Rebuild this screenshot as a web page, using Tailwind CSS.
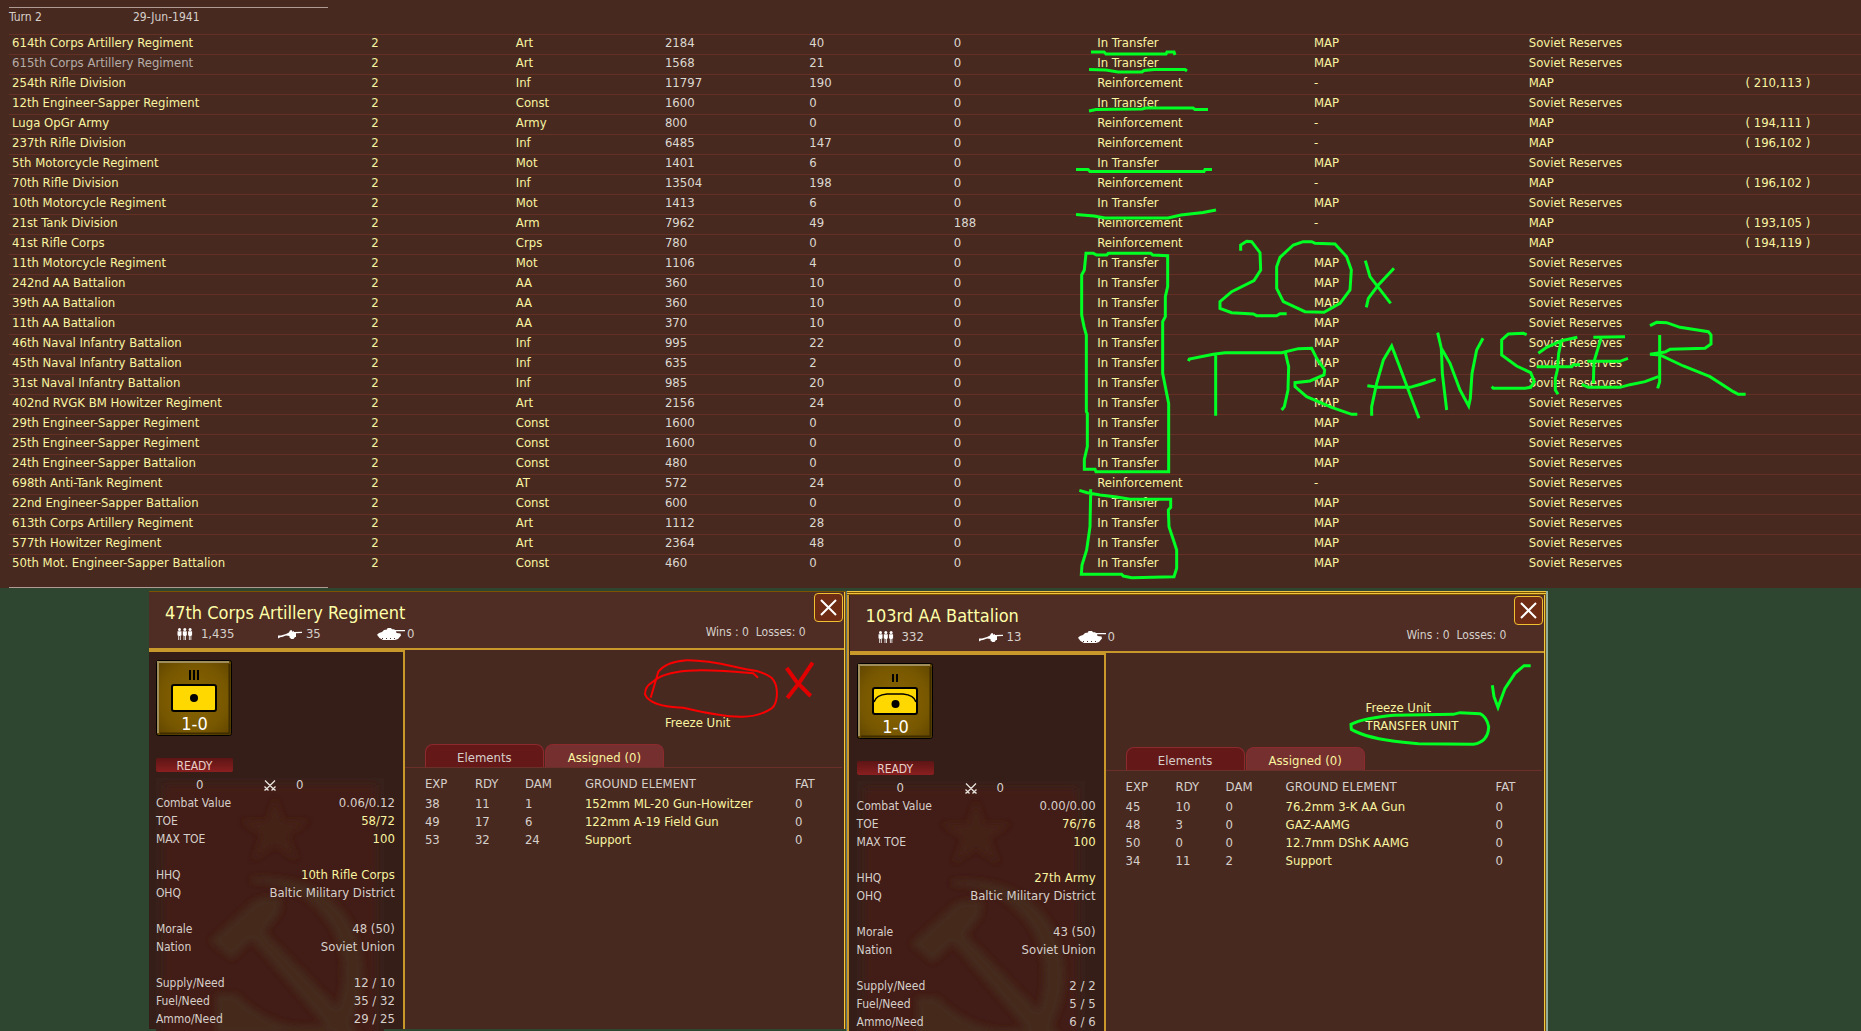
<!DOCTYPE html>
<html lang="en">
<head>
<meta charset="utf-8">
<title>Reinforcements</title>
<script src="https://cdn.jsdelivr.net/npm/@tailwindcss/browser@4"></script>
</head>
<body class="bg-[#2e452f] font-['DejaVu_Sans_Condensed','Noto_Sans',sans-serif] text-[13px] leading-[18px] text-[#d6cfca]">
<main class="relative flex min-h-screen flex-col">

  <section class="bg-[#482920] pl-[9px] pt-[7px]">
    <div class="flex h-[19px] w-[319px] border-t border-[#b09a94] text-[12px]">
      <span class="w-[124px]">Turn 2</span><span>29-Jun-1941</span>
    </div>
    <table class="mt-2 w-full table-fixed border-separate border-spacing-0 text-left text-[#f8f4a0]">
      <colgroup>
        <col class="w-[19.4%]"><col class="w-[7.8%]"><col class="w-[8%]"><col class="w-[7.8%]"><col class="w-[7.8%]"><col class="w-[7.8%]"><col class="w-[11.7%]"><col class="w-[11.6%]"><col class="w-[11.7%]"><col>
      </colgroup>
      <tbody id="units"></tbody>
    </table>
    <div class="mt-[13px] w-[319px] border-t border-[#b09a94]"></div>
  </section>

  <div class="ml-[8%] mt-[3px] flex w-[75.2%] flex-1" id="panels"></div>

  <svg class="pointer-events-none absolute inset-0 h-full w-full fill-none stroke-[#00ff22] stroke-3 [&_path]:[vector-effect:non-scaling-stroke]" viewBox="0 0 1861 1031" preserveAspectRatio="none" aria-hidden="true">
    <path d="M1091 52H1104L1106 54H1166L1167 52H1174L1175 55"/>
    <path d="M1089 69.500L1106 70 1118 72H1142L1144 70.500 1154 69.500H1185L1187 71"/>
    <path d="M1089 111L1096 109.500 1142 109 1146 108H1193L1195 109.500H1208"/>
    <path d="M1076 169.500H1088L1090 171.500H1204L1205 169.500H1212"/>
    <path d="M1076 214.500L1094 216 1105 218H1168L1181 215 1203 212.500 1216 210"/>
    <g transform="translate(1050 220) scale(.33333)">
      <path d="M108 100H130L140 105H170L175 100H302L308 105 353 107V200L346 230V290L338 305V460L350 520 356 550V755H138L135 748H103V718L112 680V580L109 575V345L102 320 95 285V165L103 150Z"/>
      <path d="M572 92V75L590 64 605 65 630 98 632 150 612 182 545 215 510 245V265L545 278 610 282 620 287H680L690 281H710"/>
      <path d="M760 65L730 75 690 112 680 140V205L700 245 765 275 822 277 870 250 900 210 904 150 890 110 855 72 795 70 785 65Z"/>
      <path d="M946 122L960 170 1022 250M1032 145L985 195 955 235 949 262"/>
      <path d="M415 423L418 417 490 403 525 398H695L745 386 785 385 800 415 824 450 822 465 780 483 735 488V500L770 530 845 562 905 583H922M497 403V587M706 398L716 440 714 510 703 560 695 570"/>
      <path d="M965 587V560L980 490 1000 420 1025 378 1045 430 1075 510 1107 595M952 497L985 502H1080L1115 492 1157 478"/>
      <path d="M88 811L112 818 150 825 200 831 240 838H362V862L355 870 357 920 372 965 380 990V1045L372 1070 340 1071 245 1073 220 1068 215 1063H94L96 1035 110 990 120 920 122 818V808"/>
    </g>
    <g transform="translate(1400 220) scale(.33333)">
      <path d="M113 338L124 385 127 460 140 570M124 385L150 430 180 510 206 558 211 535 216 460 230 390 249 355"/>
      <path d="M380 344L370 340 325 342 305 360V405L350 438 392 458 403 485 392 502 375 505H280L275 500"/>
      <path d="M415 400L440 382 485 362 532 352M484 362L476 400 472 450 466 475V510L474 523M410 440H515L520 434H540"/>
      <path d="M580 352L675 350M603 355L588 405 582 425 580 490M562 424H660L684 415M545 493L565 502H660L690 494 735 485 775 470"/>
      <path d="M750 317L770 307 800 308 840 322 925 335 933 345V372L915 385 810 388 795 396 750 403 780 405 850 438 930 470 1000 515 1015 523H1037M779 345V485L773 505"/>
    </g>
    <g transform="translate(1100 580) scale(.33333)">
      <path d="M1177 316L1182 350 1194 382 1215 325 1245 280 1272 257H1292"/>
      <path d="M1140 401L1080 398 1060 403 880 406Q790 415 753 433L754 448Q800 475 910 487L955 491 1120 493Q1165 485 1166 440 1160 410 1140 401Z"/>
    </g>
    <g transform="translate(400 580) scale(.33333)">
      <path class="stroke-[#f80000] stroke-2" d="M752 353L775 275Q800 245 860 241C940 240 1000 262 1070 273 1110 285 1130 295 1131 340Q1130 375 1115 385 1075 412 1020 410C960 410 880 390 850 383Q750 380 735 343 735 320 755 308C800 265 900 265 1060 280L1074 293"/>
      <path class="stroke-[#e00000] stroke-4" d="M1160 264L1190 306 1232 348M1238 248L1200 305 1162 354"/>
    </g>
  </svg>
</main>

<script>
const units = [
  ["614th Corps Artillery Regiment","Art","2184","40","0","T"],
  ["615th Corps Artillery Regiment","Art","1568","21","0","T"],
  ["254th Rifle Division","Inf","11797","190","0","( 210,113 )"],
  ["12th Engineer-Sapper Regiment","Const","1600","0","0","T"],
  ["Luga OpGr Army","Army","800","0","0","( 194,111 )"],
  ["237th Rifle Division","Inf","6485","147","0","( 196,102 )"],
  ["5th Motorcycle Regiment","Mot","1401","6","0","T"],
  ["70th Rifle Division","Inf","13504","198","0","( 196,102 )"],
  ["10th Motorcycle Regiment","Mot","1413","6","0","T"],
  ["21st Tank Division","Arm","7962","49","188","( 193,105 )"],
  ["41st Rifle Corps","Crps","780","0","0","( 194,119 )", ""],
  ["11th Motorcycle Regiment","Mot","1106","4","0","T"],
  ["242nd AA Battalion","AA","360","10","0","T"],
  ["39th AA Battalion","AA","360","10","0","T"],
  ["11th AA Battalion","AA","370","10","0","T"],
  ["46th Naval Infantry Battalion","Inf","995","22","0","T"],
  ["45th Naval Infantry Battalion","Inf","635","2","0","T"],
  ["31st Naval Infantry Battalion","Inf","985","20","0","T"],
  ["402nd RVGK BM Howitzer Regiment","Art","2156","24","0","T"],
  ["29th Engineer-Sapper Regiment","Const","1600","0","0","T"],
  ["25th Engineer-Sapper Regiment","Const","1600","0","0","T"],
  ["24th Engineer-Sapper Battalion","Const","480","0","0","T"],
  ["698th Anti-Tank Regiment","AT","572","24","0","R"],
  ["22nd Engineer-Sapper Battalion","Const","600","0","0","T"],
  ["613th Corps Artillery Regiment","Art","1112","28","0","T"],
  ["577th Howitzer Regiment","Art","2364","48","0","T"],
  ["50th Mot. Engineer-Sapper Battalion","Const","460","0","0","T"]
];
const cell = t => `<td class="border-t border-[#653024] p-0 pl-[3px]">${t}</td>`;
const num = t => `<td class="border-t border-[#653024] p-0 pl-1 text-[#dcd8d0]">${t}</td>`;
document.getElementById("units").innerHTML = units.map((u, i) => {
  const transfer = u[5] === "T", reserve = transfer || u[5] === "R";
  const from = transfer ? "MAP" : (u.length > 6 ? u[6] : "-");
  const shade = i === 1 ? "text-[#b5aca6]" : "text-[#f8f4a0]";
  return `<tr class="h-5 align-top leading-[16px]">
    <th scope="row" class="border-t border-[#653024] p-0 pl-[3px] font-normal whitespace-nowrap ${shade}">${u[0]}</th>
    ${cell("2")}${cell(u[1])}${num(u[2])}${num(u[3])}${num(u[4])}
    ${cell(transfer ? "In Transfer" : "Reinforcement")}${cell(from)}${cell(reserve ? "Soviet Reserves" : "MAP")}${cell(reserve ? "" : u[5])}
  </tr>`;
}).join("");

const man = `<circle cx="2.500" cy="1.500" r="1.500"/><path d="M.5 3.300h4v4.200h-.8V12H2.900V8h-.8v4H1.300V7.500H.5z"/>`;
const men = `<svg class="w-4 h-3 fill-white" viewBox="0 0 16 12">${man}<g transform="translate(5.300)">${man}</g><g transform="translate(10.600)">${man}</g></svg>`;
const gun = `<svg class="w-6 h-3 fill-white" viewBox="0 0 24 12"><path d="M0 7.500h3L8 6l3-1.500L12 2.500l1.500-.5 1 1.700L16 3V4l8-.3v1.200L18 5.300V9h-1l-1.500 2h-2.200L11.500 9.500V8L8 7.600 4 9l-2 .2-1.500 1.300L0 9.500z"/></svg>`;
const tank = `<svg class="w-7 h-3 fill-white" viewBox="0 0 28 12"><path d="M5 4l2-2 3-.5.500-1.500h3.500l1 1.200h2L18 2h10v1.200h-9L19.500 5l4 .5.5 2L21 11l-3 1H6L2.500 10 0 6.700 2 5z"/><path class="stroke-[#4f2d24]" stroke-dasharray="1 3" d="M5 10.500h14"/></svg>`;
const cross = `<svg class="w-3 h-[11px] fill-none stroke-[#e8e2dc]" viewBox="0 0 12 11"><path stroke-width="1.300" d="M1 .5l9.500 9.500M11 .5L1.500 10M.5 6.500l4 4M11.500 6.500l-4 4M.5 10.500l2-2M11.500 10.500l-2-2"/></svg>`;

const badge = p => `<svg class="h-[76px] w-[76px]" viewBox="0 0 76 76" role="img" aria-label="Unit counter">
  <defs><radialGradient id="g${p.id}" r=".75"><stop offset="0" stop-color="#8a6500"/><stop offset=".6" stop-color="#775700"/><stop offset="1" stop-color="#5a4000"/></radialGradient></defs>
  <rect x=".5" y=".5" width="75" height="75" rx="2" fill="url(#g${p.id})" stroke="#000"/>
  <path d="M2 73V2H73" fill="none" stroke="#a08d5c" stroke-width="2"/><path d="M73.500 4v69.500H4" fill="none" stroke="#3f2d00" stroke-width="2"/>
  ${p.bars === 3 ? `<path d="M34 10v10M38 10v10M42 10v10" stroke="#000" stroke-width="2"/>` : `<path d="M36 11v8M40 11v8" stroke="#000" stroke-width="2"/>`}
  <rect x="16" y="25" width="44" height="26" rx="2" fill="#ffd800" stroke="#000" stroke-width="2"/>
  ${p.arc ? `<path d="M17 39Q19 32 30 31H46Q57 32 59 39" fill="none" stroke="#000" stroke-width="1.500"/><circle cx="38.500" cy="41" r="4"/>` : `<circle cx="38" cy="38" r="4"/>`}
  <text x="38.500" y="70" text-anchor="middle" fill="#fff" font-size="18">1-0</text></svg>`;

const flag = id => `<svg class="absolute left-[7px] top-[126px] h-[254px] w-[228px]" viewBox="0 0 228 254" aria-hidden="true">
  <defs><filter id="b${id}"><feGaussianBlur stdDeviation="3"/></filter></defs>
  <rect width="228" height="254" fill="#38211b"/><rect x="8" y="7" width="212" height="256" fill="#421c18" filter="url(#b${id})"/>
  <g filter="url(#b${id})"><path fill="#442219" d="M119 20L127 43 153 43 132 57 141 82 119 67 97 82 106 57 85 43 111 43z"/>
  <path fill="#452c1a" d="M54 163L99 122Q115 116 126 122L123 136 109 154 178 226 208 260H180L96 162 76 181z"/>
  <path fill="#452a1a" d="M95 100Q165 95 195 145 222 200 190 254H170Q200 200 177 152 150 105 95 104zM60 216L80 216Q110 245 140 248H175V256H60z"/></g></svg>`;

const stat = ([l, v, hot]) => l ? `<div class="flex justify-between"><dt class="text-[12px]">${l}</dt><dd class="${hot ? "text-[#f8f4a0]" : "text-[#d6cfca]"}">${v}</dd></div>` : `<div class="h-[18px]"></div>`;

const panel = p => `
<div class="flex flex-1 flex-col border-r border-[#7a5200] bg-[#482920]"><div class="flex flex-1 flex-col border-r border-[#f0c540]">
  <header class="flex h-[58px] justify-between border-b-2 border-[#c9982a] bg-[#4f2d24]">
    <div class="pl-4 pt-[9px]">
      <h2 class="text-[18px] leading-[24px] text-[#ffffa8]">${p.name}</h2>
      <div class="flex items-center pl-3">
        <div class="flex w-[101px] items-center gap-2">${men}${p.men}</div>
        <div class="flex w-[99px] items-center gap-1">${gun}${p.guns}</div>
        <div class="flex items-center gap-[2px]">${tank}0</div>
      </div>
    </div>
    <div class="flex gap-2 pr-px pt-px">
      <span class="mt-[30px] whitespace-pre text-[12px]">Wins : 0  Losses: 0</span>
      <button type="button" aria-label="Close" class="flex h-[29px] w-[29px] items-center justify-center rounded border border-[#f0c030] bg-[#6e2c14]"><svg class="h-[17px] w-[17px] stroke-white stroke-2" viewBox="0 0 17 17"><path d="M1 1l15 15M16 1L1 16"/></svg></button>
    </div>
  </header>
  <div class="flex flex-1">
    <div class="relative w-[256px] border-r-2 border-t-2 border-[#c9982a] bg-[#361e18] pl-[7px] pr-2 pt-[8px]">
      ${flag(p.id)}
      <div class="relative">
        ${badge(p)}
        <div class="mt-[22px] h-[14px] w-[77px] rounded-xs bg-linear-to-b from-[#5e1515] to-[#8a1f20] text-center text-[12px] leading-[16px] text-[#e8d0c8]">READY</div>
        <div class="mt-1 flex h-[18px] items-center pl-10"><span class="w-[68px]">0</span>${cross}<span class="pl-5">0</span></div>
        <dl>${p.stats.map(stat).join("")}</dl>
      </div>
    </div>
    <div class="flex-1">
      <div class="flex h-[94px] flex-col items-start justify-end pb-3 pl-[260px] text-[#f8f4a0]">
        <button type="button">Freeze Unit</button>${p.transfer ? `<button type="button">TRANSFER UNIT</button>` : ""}
      </div>
      <div class="mr-[2px] flex gap-px border-b border-[#6b3029] pl-5" role="tablist">
        <button type="button" role="tab" aria-selected="true" class="h-[23px] w-[119px] rounded-t-lg border border-b-0 border-[#8c2a2e] bg-[#651818] pt-1">Elements</button>
        <button type="button" role="tab" aria-selected="false" class="h-[23px] w-[119px] rounded-t-lg border border-b-0 border-[#8c2a2e] bg-[#762f2f] pt-1 text-[#f8f4a0]">Assigned (0)</button>
      </div>
      <table class="ml-5 mt-[7px] table-fixed text-left">
        <colgroup><col class="w-[50px]"><col class="w-[50px]"><col class="w-[60px]"><col class="w-[210px]"><col class="w-[40px]"></colgroup>
        <thead><tr class="h-5 align-top"><th class="p-0 font-normal">EXP</th><th class="p-0 font-normal">RDY</th><th class="p-0 font-normal">DAM</th><th class="p-0 font-normal">GROUND ELEMENT</th><th class="p-0 font-normal">FAT</th></tr></thead>
        <tbody>${p.rows.map(r => `<tr><td class="p-0">${r[0]}</td><td class="p-0">${r[1]}</td><td class="p-0">${r[2]}</td><td class="p-0 text-[#f8f4a0]">${r[3]}</td><td class="p-0">0</td></tr>`).join("")}</tbody>
      </table>
    </div>
  </div>
</div></div>`;

const first = { id: 1, name: "47th Corps Artillery Regiment", men: "1,435", guns: 35, bars: 3,
  stats: [["Combat Value","0.06/0.12"],["TOE","58/72",1],["MAX TOE","100",1],[],["HHQ","10th Rifle Corps",1],["OHQ","Baltic Military District"],[],["Morale","48 (50)"],["Nation","Soviet Union"],[],["Supply/Need","12 / 10"],["Fuel/Need","35 / 32"],["Ammo/Need","29 / 25"]],
  rows: [[38,11,1,"152mm ML-20 Gun-Howitzer"],[49,17,6,"122mm A-19 Field Gun"],[53,32,24,"Support"]] };
const second = { id: 2, name: "103rd AA Battalion", men: "332", guns: 13, bars: 2, arc: true, transfer: true,
  stats: [["Combat Value","0.00/0.00"],["TOE","76/76",1],["MAX TOE","100",1],[],["HHQ","27th Army",1],["OHQ","Baltic Military District"],[],["Morale","43 (50)"],["Nation","Soviet Union"],[],["Supply/Need","2 / 2"],["Fuel/Need","5 / 5"],["Ammo/Need","6 / 6"]],
  rows: [[45,10,0,"76.2mm 3-K AA Gun"],[48,3,0,"GAZ-AAMG"],[50,0,0,"12.7mm DShK AAMG"],[34,11,2,"Support"]] };

document.getElementById("panels").innerHTML = `
  <section class="mb-[2px] flex flex-[697] border-t border-[#7a5200]">${panel(first)}</section>
  <div class="w-px bg-[#54717c]"></div>
  <section class="flex flex-[700] flex-col bg-[#361e18]">
    <div class="h-px bg-[#f0c540]"></div><div class="h-px bg-[#7a5200]"></div><div class="h-px bg-[#f0c540]"></div><div class="h-px bg-[#7a5200]"></div>
    <div class="flex flex-1 border-l-2 border-[#c9982a] pl-px">${panel(second)}</div>
  </section>
  <div class="w-[2px] bg-[#93ae9a]"></div>`;
</script>
</body>
</html>
